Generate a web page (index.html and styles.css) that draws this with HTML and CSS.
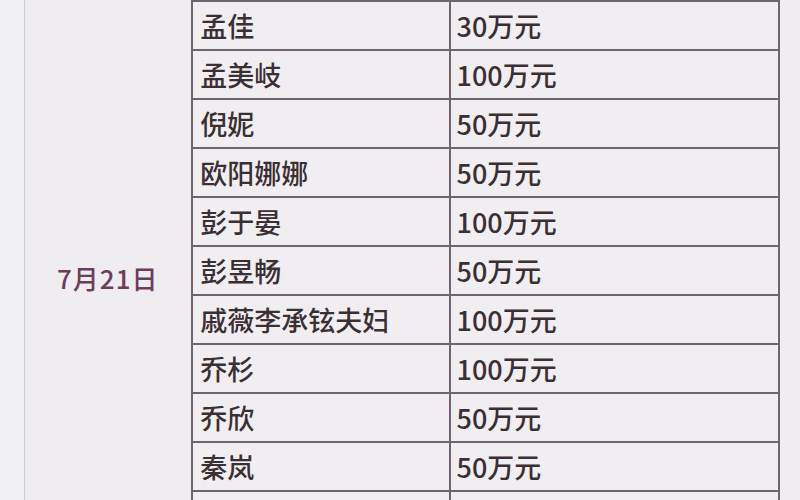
FILE: index.html
```html
<!DOCTYPE html>
<html lang="zh">
<head>
<meta charset="utf-8">
<link rel="stylesheet" href="styles.css">
</head>
<body>
<div class="page">
  <div class="frame">
    <table class="sheet">
      <colgroup>
        <col class="c-date">
        <col class="c-name">
        <col class="c-amount">
      </colgroup>
      <tbody>
        <tr><td class="date" rowspan="12"><div class="date-text">7月21日</div></td><td class="name"></td><td class="amount"></td></tr>
        <tr><td class="name">孟佳</td><td class="amount">30万元</td></tr>
        <tr><td class="name">孟美岐</td><td class="amount">100万元</td></tr>
        <tr><td class="name">倪妮</td><td class="amount">50万元</td></tr>
        <tr><td class="name">欧阳娜娜</td><td class="amount">50万元</td></tr>
        <tr><td class="name">彭于晏</td><td class="amount">100万元</td></tr>
        <tr><td class="name">彭昱畅</td><td class="amount">50万元</td></tr>
        <tr><td class="name">戚薇李承铉夫妇</td><td class="amount">100万元</td></tr>
        <tr><td class="name">乔杉</td><td class="amount">100万元</td></tr>
        <tr><td class="name">乔欣</td><td class="amount">50万元</td></tr>
        <tr><td class="name">秦岚</td><td class="amount">50万元</td></tr>
        <tr><td class="name"></td><td class="amount"></td></tr>
      </tbody>
    </table>
  </div>
</div>
</body>
</html>
```
FILE: styles.css
```css
html, body {
  margin: 0;
  padding: 0;
  height: 100%;
  overflow: hidden;
}
body {
  background: #f1f0f3;
  font-family: "Noto Sans CJK SC", "Noto Sans", sans-serif;
}
.page {
  padding-left: 24px;
  height: 500px;
  overflow: hidden;
}
.frame {
  border-left: 1px solid #cfcdd3;
  background: #efedf1;
  width: 779px;
  min-height: 620px;
}
.sheet {
  border-collapse: collapse;
  table-layout: fixed;
  width: 755px;
  margin-top: -49px;
}
.c-date { width: 167px; }
.c-name { width: 257px; }
.c-amount { width: 329px; }
.sheet td {
  height: 47px;
  padding: 0 0 0 7px;
  border: 2px solid #6f6470;
  font-size: 27px;
  font-weight: 500;
  line-height: 47px;
  color: #3a2f33;
  background: #f1eef2;
  white-space: nowrap;
  overflow: hidden;
}
.sheet td.date {
  border-left: none;
  border-top: none;
  border-bottom: none;
  background: #efedf0;
  vertical-align: top;
  padding: 0;
}
.date-text {
  padding-top: 306px;
  padding-left: 32px;
  font-size: 26px;
  font-weight: 500;
  line-height: 40px;
  color: #6e3c5d;
  letter-spacing: 1px;
}
.sheet td.amount {
  padding-left: 6px;
}
```
